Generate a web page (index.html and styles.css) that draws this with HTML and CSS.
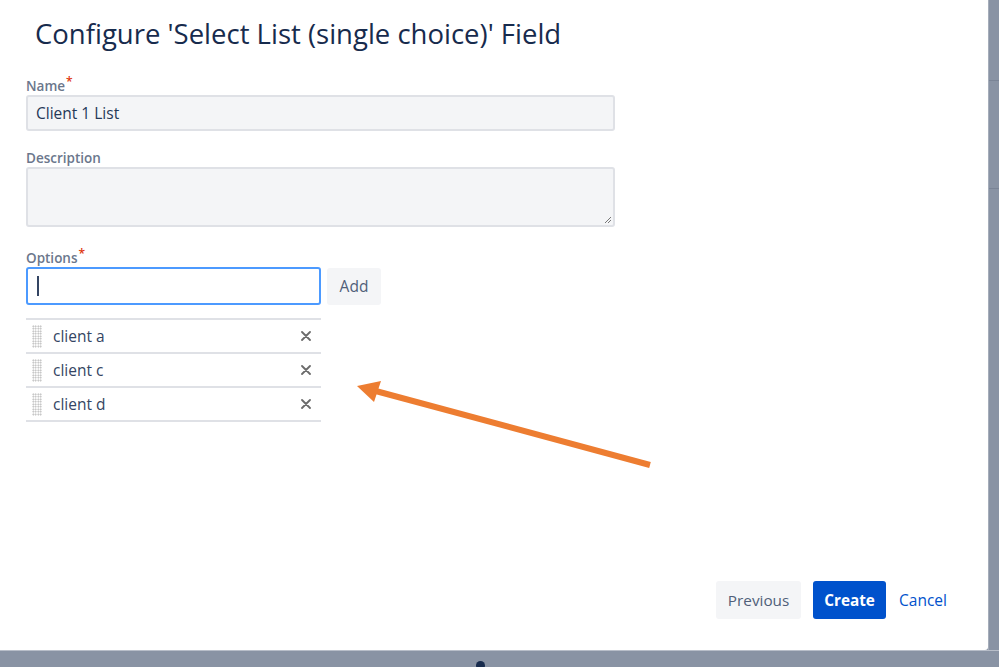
FILE: index.html
```html
<!DOCTYPE html>
<html lang="en">
<head>
<meta charset="utf-8">
<title>Configure Field</title>
<link rel="stylesheet" href="styles.css">
</head>
<body>
<div class="page">
  <div class="row">
    <div class="dialog">
      <h1 class="title">Configure 'Select List (single choice)' Field</h1>
      <div class="form">
        <div class="field">
          <label class="label">Name<span class="req">*</span></label>
          <div class="input filled">Client 1 List</div>
        </div>
        <div class="field">
          <label class="label">Description</label>
          <div class="textarea">
            <svg class="grip-resize" width="9" height="9" viewBox="0 0 9 9"><path d="M8 2 L2 8 M8 5 L5 8" stroke="#777" stroke-width="1"/></svg>
          </div>
        </div>
        <div class="field">
          <label class="label">Options<span class="req">*</span></label>
          <div class="opt-add">
            <div class="input focused"><span class="caret"></span></div>
            <div class="btn-add">Add</div>
          </div>
          <ul class="options">
            <li class="option"><span class="handle"></span><span class="opt-text">client a</span><svg class="remove" width="10" height="10" viewBox="0 0 10 10"><path d="M1 1 L9 9 M9 1 L1 9" stroke="#6b6b6b" stroke-width="1.8" stroke-linecap="round"/></svg></li>
            <li class="option"><span class="handle"></span><span class="opt-text">client c</span><svg class="remove" width="10" height="10" viewBox="0 0 10 10"><path d="M1 1 L9 9 M9 1 L1 9" stroke="#6b6b6b" stroke-width="1.8" stroke-linecap="round"/></svg></li>
            <li class="option"><span class="handle"></span><span class="opt-text">client d</span><svg class="remove" width="10" height="10" viewBox="0 0 10 10"><path d="M1 1 L9 9 M9 1 L1 9" stroke="#6b6b6b" stroke-width="1.8" stroke-linecap="round"/></svg></li>
          </ul>
        </div>
      </div>
      <div class="footer">
        <div class="btn btn-prev">Previous</div>
        <div class="btn btn-create">Create</div>
        <div class="btn-link">Cancel</div>
      </div>
      <svg class="arrow" width="320" height="100" viewBox="340 370 320 100">
        <line x1="650" y1="465" x2="372" y2="390" stroke="#ed7d31" stroke-width="6"/>
        <polygon points="357,386 381,381 374,402" fill="#ed7d31"/>
      </svg>
    </div>
    <div class="side">
      <div class="side-line first"></div>
      <div class="side-line second"></div>
    </div>
  </div>
  <div class="bottom"><span class="dot"></span></div>
</div>
</body>
</html>
```
FILE: styles.css
```css
* { box-sizing: border-box; }
html, body { margin: 0; padding: 0; }
body {
  background: #8993a4;
  font-family: "Open Sans", "Noto Sans", "Liberation Sans", sans-serif;
  color: #172b4d;
  width: 999px;
  height: 667px;
  overflow: hidden;
}
.page { display: flex; flex-direction: column; }
.row { display: flex; }
.dialog {
  position: relative;
  width: 988px;
  height: 650px;
  background: #fff;
  border-bottom-right-radius: 3px;
  display: flex;
  flex-direction: column;
}
.title {
  margin: 17px 0 0 35px;
  font-size: 27.5px;
  line-height: 34px;
  font-weight: 500;
  color: #172b4d;
  letter-spacing: 0;
}
.form {
  padding-left: 26px;
  display: flex;
  flex-direction: column;
}
.field { display: flex; flex-direction: column; }
.label {
  font-size: 13.5px;
  font-weight: 600;
  color: #6b778c;
  line-height: 16px;
  height: 16px;
  margin-bottom: 1px;
}
.field:first-child { margin-top: 27px; }
.field + .field { margin-top: 19px; }
.field:last-child { margin-top: 23px; }
.req { color: #de350b; font-size: 12px; vertical-align: top; position: relative; top: -4px; margin-left: 1px; }
.input {
  width: 589px;
  height: 36px;
  border: 2px solid #dfe1e6;
  border-radius: 3px;
  background: #f4f5f7;
  font-size: 15.5px;
  line-height: 32px;
  padding-left: 8px;
  color: #253858;
}
.textarea {
  width: 589px;
  height: 60px;
  border: 2px solid #dfe1e6;
  border-radius: 3px;
  background: #f4f5f7;
  display: flex;
  justify-content: flex-end;
  align-items: flex-end;
  padding: 0 1px 1px 0;
}
.grip-resize { display: block; }
.opt-add { display: flex; gap: 6px; align-items: flex-start; }
.input.focused {
  width: 295px;
  height: 38px;
  background: #fff;
  border-color: #4c9aff;
  display: flex;
  align-items: center;
}
.caret { display: block; width: 2px; height: 20px; background: #344563; margin-left: 1px; }
.btn-add {
  margin-top: 1px;
  width: 54px;
  height: 37px;
  background: #f4f5f7;
  border-radius: 3px;
  font-size: 15.5px;
  line-height: 37px;
  text-align: center;
  color: #505f79;
}
.options {
  list-style: none;
  margin: 13px 0 0 0;
  padding: 0;
  width: 295px;
  border-top: 2px solid #dfe1e6;
}
.option {
  height: 34px;
  border-bottom: 2px solid #dfe1e6;
  display: flex;
  align-items: center;
  font-size: 15.5px;
  color: #344563;
}
.handle {
  width: 10px;
  height: 23px;
  margin-left: 6px;
  background-image: radial-gradient(circle, #b3b3b3 0.7px, transparent 1px);
  background-size: 2.5px 2.5px;
}
.opt-text { margin-left: 11px; flex: 1; }
.remove { display: block; margin-right: 10px; }
.footer {
  margin-top: auto;
  margin-bottom: 31px;
  display: flex;
  justify-content: flex-end;
  align-items: center;
  padding-right: 41px;
  gap: 12px;
}
.btn {
  height: 38px;
  border-radius: 3px;
  font-size: 15.3px;
  line-height: 38px;
  text-align: center;
}
.btn-prev { width: 85px; background: #f4f5f7; color: #505f79; }
.btn-create { width: 73px; background: #0052cc; color: #fff; font-weight: 700; }
.btn-link { color: #0052cc; font-size: 15.5px; margin-left: 1px; }
.arrow { position: absolute; left: 340px; top: 370px; overflow: visible; }
.side {
  flex: 1;
  display: flex;
  flex-direction: column;
  border-left: 1px solid #a5adba;
}
.side-line { height: 1px; background: #7a8496; }
.side-line.first { margin-top: 80px; }
.side-line.second { margin-top: 107px; }
.bottom {
  height: 17px;
  border-top: 1px solid #b8bec9;
  padding-left: 476px;
  padding-top: 10px;
}
.dot { display: block; width: 9px; height: 9px; border-radius: 50%; background: #172b4d; }
```
